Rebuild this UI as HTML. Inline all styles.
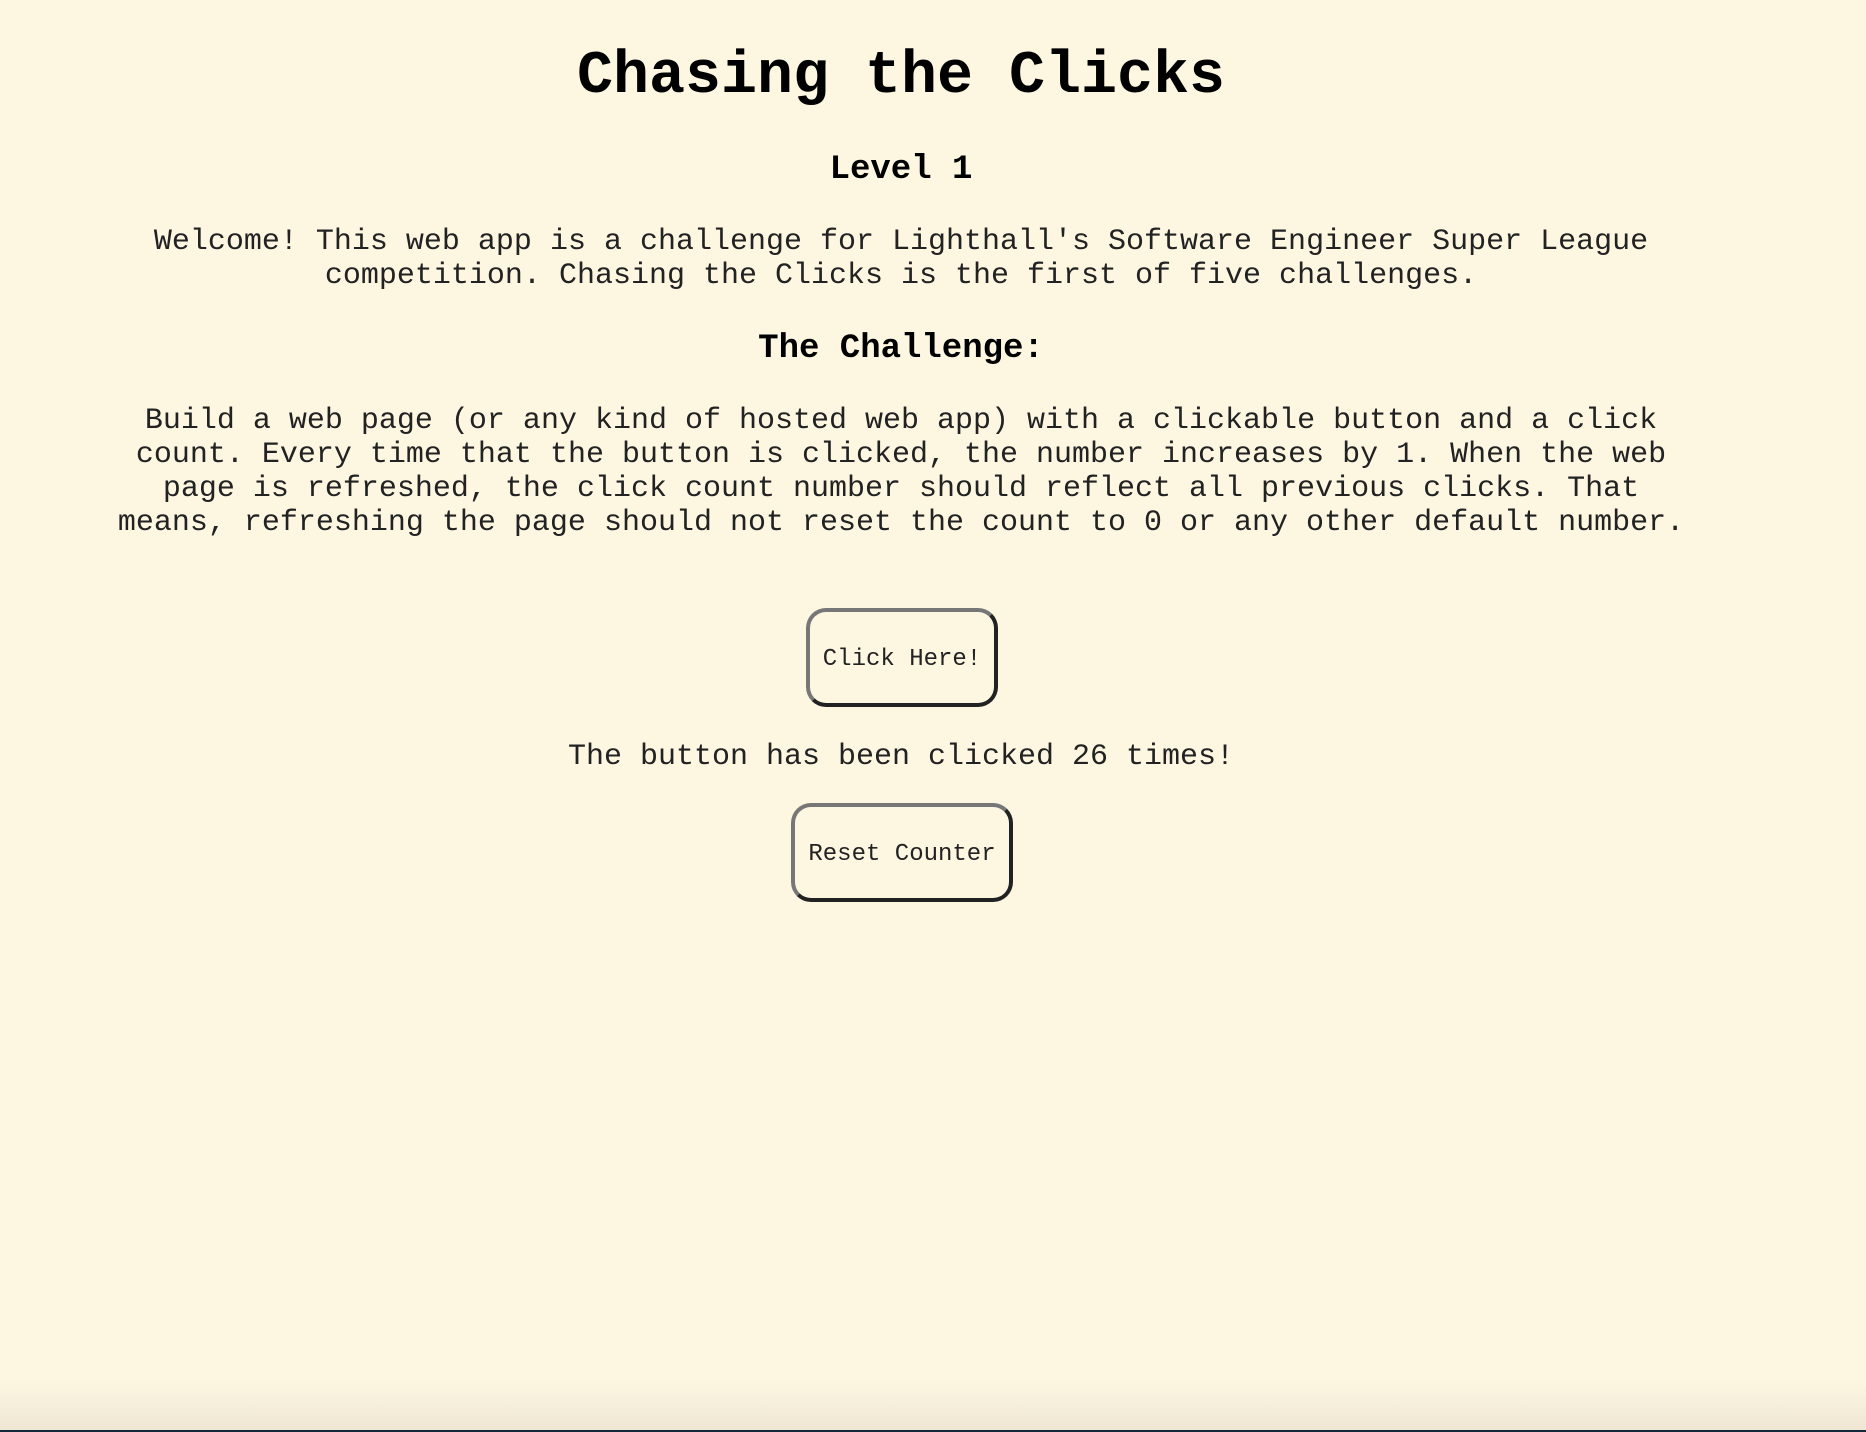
<!DOCTYPE html>
<html><head><meta charset="utf-8"><style>
html,body{margin:0;padding:0}
body{width:1866px;height:1432px;position:relative;overflow:hidden;background:#fdf6e1;font-family:"Liberation Mono","Courier New",monospace;color:#222}
.l{position:absolute;left:0;width:1802px;text-align:center;white-space:pre;font-size:30px;line-height:34px}
.h1{font-size:60px;line-height:70px;font-weight:bold;color:#000}
.h3{font-size:34px;line-height:40px;font-weight:bold;color:#000}
.btn{position:absolute;box-sizing:border-box;height:99px;border:4px solid;border-color:#777 #222 #222 #777;border-radius:20px;background:#fdf6e1;font-size:24px;display:flex;align-items:center;justify-content:center;color:#222;white-space:pre;padding-top:3px}
.bot{position:absolute;left:0;right:0;bottom:2px;height:50px;background:linear-gradient(#fdf6e100,#efe7d4)}
.line{position:absolute;left:0;right:0;bottom:0;height:2px;background:#13283a}
</style></head><body>
<div class="l h1" style="top:42px">Chasing the Clicks</div>
<div class="l h3" style="top:150px">Level 1</div>
<div class="l" style="top:225px">Welcome! This web app is a challenge for Lighthall's Software Engineer Super League</div>
<div class="l" style="top:259px">competition. Chasing the Clicks is the first of five challenges.</div>
<div class="l h3" style="top:329px">The Challenge:</div>
<div class="l" style="top:404px">Build a web page (or any kind of hosted web app) with a clickable button and a click</div>
<div class="l" style="top:438px">count. Every time that the button is clicked, the number increases by 1. When the web</div>
<div class="l" style="top:472px">page is refreshed, the click count number should reflect all previous clicks. That</div>
<div class="l" style="top:506px">means, refreshing the page should not reset the count to 0 or any other default number.</div>
<div class="btn" style="left:806px;top:608px;width:192px">Click Here!</div>
<div class="l" style="top:740px">The button has been clicked 26 times!</div>
<div class="btn" style="left:791px;top:803px;width:222px">Reset Counter</div>
<div class="bot"></div><div class="line"></div>
</body></html>
